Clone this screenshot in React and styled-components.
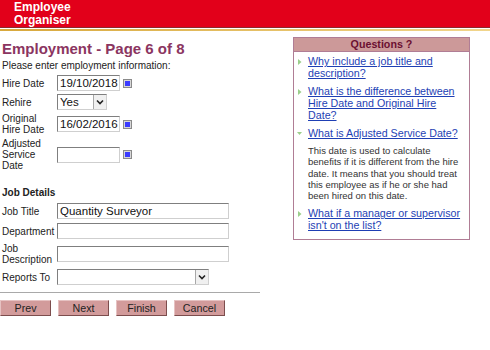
import styled, { createGlobalStyle } from "styled-components";

const GlobalStyle = createGlobalStyle`
  body {
    margin: 0;
    background: #fff;
    font-family: "Liberation Sans", Arial, sans-serif;
    color: #222;
  }
`;

const Header = styled.header`
  height: 28px;
  box-sizing: border-box;
  padding: 1px 0 0 14px;
  background: #e2001a;
  border-bottom: 1px solid #8c2b2b;
  color: #fff;
  font-weight: bold;
  font-size: 12px;
  line-height: 13px;
`;

const GoldRule = styled.div`
  height: 2px;
  margin-top: 1px;
  background: linear-gradient(to right, #d8a83c, #f1d58c);
`;

const Main = styled.div`
  display: flex;
  align-items: flex-start;
  gap: 33px;
`;

const FormColumn = styled.div`
  width: 260px;
`;

const Inner = styled.div`
  padding-left: 2px;
`;

const Title = styled.h1`
  margin: 9px 0 0;
  font-size: 15px;
  line-height: 18px;
  font-weight: bold;
  color: #8b3561;
`;

const Intro = styled.p`
  margin: 2px 0 0;
  font-size: 10px;
  line-height: 12px;
`;

const FormGrid = styled.div`
  display: grid;
  grid-template-columns: 55px auto;
  row-gap: ${(p) => p.$gap || 3}px;
  align-items: center;
  margin-top: ${(p) => p.$top || 0}px;
`;

const Label = styled.label`
  font-size: 10px;
  line-height: 11px;
  color: #222;
`;

const Field = styled.div`
  display: flex;
  align-items: center;
  gap: 3px;
`;

const TextBox = styled.div`
  width: ${(p) => p.$width}px;
  height: 16px;
  box-sizing: border-box;
  padding: 0 2px;
  border: 1px solid;
  border-color: #7f7f7f #cfcfcf #cfcfcf #7f7f7f;
  background: #fff;
  font-size: 11.5px;
  line-height: 14px;
  color: #111;
  white-space: nowrap;
  overflow: hidden;
`;

const SelectBox = styled.div`
  width: ${(p) => p.$width}px;
  height: 16px;
  box-sizing: border-box;
  display: flex;
  border: 1px solid;
  border-color: #7f7f7f #cfcfcf #cfcfcf #7f7f7f;
  background: #fff;
  font-size: 11.5px;
  line-height: 14px;
  color: #111;
`;

const SelectText = styled.span`
  flex: 1;
  padding-left: 2px;
`;

const SelectArrow = styled.span`
  width: 12px;
  display: flex;
  align-items: center;
  justify-content: center;
  background: #f0f0f0;
  border-left: 1px solid #a8a8a8;
`;

const SectionHeading = styled.h2`
  margin: 16px 0 0;
  font-size: 10px;
  line-height: 12px;
  font-weight: bold;
`;

const Rule = styled.hr`
  margin: 7px 0 0;
  border: 0;
  border-top: 1px solid #a9a9a9;
  width: 260px;
`;

const ButtonRow = styled.div`
  display: flex;
  gap: 7px;
  margin-top: 7px;
`;

const Button = styled.button`
  width: 51px;
  height: 16px;
  padding: 0;
  box-sizing: border-box;
  border: 1px solid;
  border-color: #e6c2c2 #7c4d4d #7c4d4d #e6c2c2;
  background: #d29b9b;
  font-family: "Liberation Sans", Arial, sans-serif;
  font-size: 10.7px;
  color: #222;
`;

const Panel = styled.aside`
  width: 177px;
  box-sizing: border-box;
  margin-top: 6px;
  border: 1px solid #b07d95;
`;

const PanelTitle = styled.div`
  height: 13px;
  background: #cc9999;
  border-bottom: 1px solid #b07d95;
  text-align: center;
  font-size: 10.7px;
  line-height: 13px;
  font-weight: bold;
  color: #6b0f30;
`;

const QuestionList = styled.ul`
  list-style: none;
  margin: 0;
  padding: 3px 5px 8px 3px;
  display: flex;
  flex-direction: column;
  gap: 6px;
`;

const Question = styled.li`
  display: flex;
`;

const Bullet = styled.span`
  width: 11px;
  flex-shrink: 0;
  display: flex;
  padding-top: 4px;
`;

const QuestionBody = styled.div`
  flex: 1;
  font-size: 10.7px;
  line-height: 12px;
`;

const QuestionLink = styled.a`
  color: #1e3fb4;
  text-decoration: underline;
`;

const Answer = styled.p`
  margin: 6px 0 0;
  font-size: 9.5px;
  line-height: 11.3px;
  color: #333;
`;

function CalendarIcon() {
  return (
    <svg width="9" height="9" viewBox="0 0 9 9">
      <rect x="0.5" y="0.5" width="8" height="8" fill="#d8d8d8" stroke="#8a8a8a" />
      <rect x="2" y="2" width="5" height="5" fill="#3b3bff" />
    </svg>
  );
}

function Chevron() {
  return (
    <svg width="8" height="6" viewBox="0 0 8 6">
      <path d="M1 1.5 L4 4.5 L7 1.5" fill="none" stroke="#222" strokeWidth="1.6" />
    </svg>
  );
}

function Triangle({ open }) {
  return (
    <svg width="5" height="6" viewBox="0 0 5 6">
      {open ? (
        <path d="M0 1 L5 1 L2.5 4 Z" fill="#9ccf8c" />
      ) : (
        <path d="M1 0 L4.5 3 L1 6 Z" fill="#9ccf8c" />
      )}
    </svg>
  );
}

function DateField({ value }) {
  return (
    <Field>
      <TextBox $width={63}>{value}</TextBox>
      <CalendarIcon />
    </Field>
  );
}

function Select({ value, width }) {
  return (
    <SelectBox $width={width}>
      <SelectText>{value}</SelectText>
      <SelectArrow>
        <Chevron />
      </SelectArrow>
    </SelectBox>
  );
}

const questions = [
  { text: "Why include a job title and description?" },
  { text: "What is the difference between Hire Date and Original Hire Date?" },
  {
    text: "What is Adjusted Service Date?",
    open: true,
    answer:
      "This date is used to calculate benefits if it is different from the hire date. It means that you should treat this employee as if he or she had been hired on this date.",
  },
  { text: "What if a manager or supervisor isn't on the list?" },
];

export default function App() {
  return (
    <>
      <GlobalStyle />
      <Header>
        Employee
        <br />
        Organiser
      </Header>
      <GoldRule />
      <Main>
        <FormColumn>
          <Inner>
            <Title>Employment - Page 6 of 8</Title>
            <Intro>Please enter employment information:</Intro>
            <FormGrid $top={3} $gap={3}>
              <Label>Hire Date</Label>
              <DateField value="19/10/2018" />
              <Label>Rehire</Label>
              <Select value="Yes" width={50} />
              <Label>Original Hire Date</Label>
              <DateField value="16/02/2016" />
              <Label>
                Adjusted
                <br />
                Service
                <br />
                Date
              </Label>
              <DateField value="" />
            </FormGrid>
            <SectionHeading>Job Details</SectionHeading>
            <FormGrid $top={4} $gap={4}>
              <Label>Job Title</Label>
              <TextBox $width={172}>Quantity Surveyor</TextBox>
              <Label>Department</Label>
              <TextBox $width={172} />
              <Label>
                Job
                <br />
                Description
              </Label>
              <TextBox $width={172} />
              <Label>Reports To</Label>
              <Select value="" width={152} />
            </FormGrid>
          </Inner>
          <Rule />
          <ButtonRow>
            <Button>Prev</Button>
            <Button>Next</Button>
            <Button>Finish</Button>
            <Button>Cancel</Button>
          </ButtonRow>
        </FormColumn>
        <Panel>
          <PanelTitle>Questions ?</PanelTitle>
          <QuestionList>
            {questions.map((q) => (
              <Question key={q.text}>
                <Bullet>
                  <Triangle open={q.open} />
                </Bullet>
                <QuestionBody>
                  <QuestionLink href="#">{q.text}</QuestionLink>
                  {q.answer && <Answer>{q.answer}</Answer>}
                </QuestionBody>
              </Question>
            ))}
          </QuestionList>
        </Panel>
      </Main>
    </>
  );
}
